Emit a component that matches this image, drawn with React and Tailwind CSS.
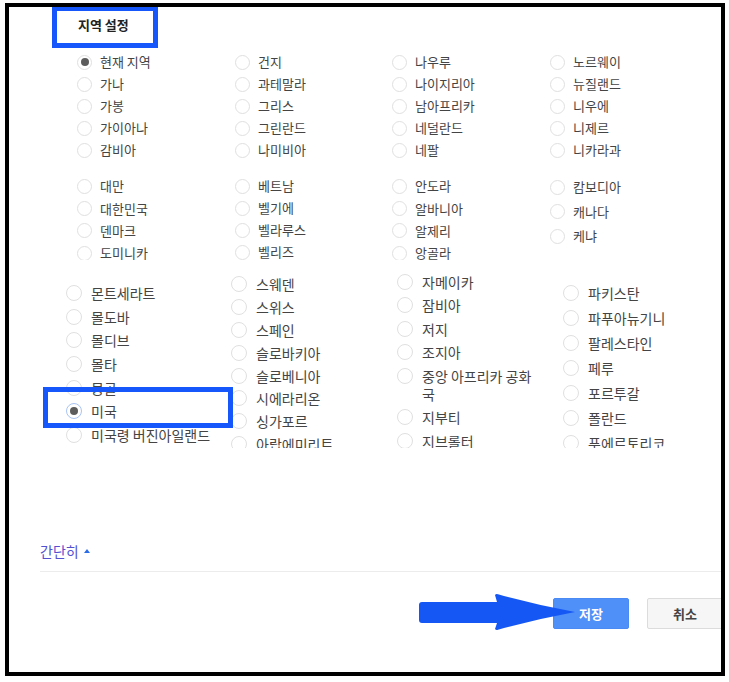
import React from "react";

const sec1 = [
  ["현재 지역", "가나", "가봉", "가이아나", "감비아"],
  ["건지", "과테말라", "그리스", "그린란드", "나미비아"],
  ["나우루", "나이지리아", "남아프리카", "네덜란드", "네팔"],
  ["노르웨이", "뉴질랜드", "니우에", "니제르", "니카라과"],
];

const sec2 = [
  { row: "h-[22.4px]", items: ["대만", "대한민국", "덴마크", "도미니카"] },
  { row: "h-[22.1px]", items: ["베트남", "벨기에", "벨라루스", "벨리즈"] },
  { row: "h-[22.4px]", items: ["안도라", "알바니아", "알제리", "앙골라"] },
  { row: "h-[24.5px]", items: ["캄보디아", "캐나다", "케냐"] },
];

const sec3 = [
  {
    col: "w-[165px] shrink-0 pt-[11px]",
    row: "h-[23.7px]",
    items: ["몬트세라트", "몰도바", "몰디브", "몰타", "몽골", "미국", "미국령 버진아일랜드"],
  },
  {
    col: "w-[166px] shrink-0 pt-[2.5px]",
    row: "h-[22.9px]",
    items: ["스웨덴", "스위스", "스페인", "슬로바키아", "슬로베니아", "시에라리온", "싱가포르", "아랍에미리트"],
  },
  {
    col: "w-[166px] shrink-0 pt-[0.4px]",
    row: "h-[23.3px]",
    items: ["자메이카", "잠비아", "저지", "조지아", "중앙 아프리카 공화국", "지부티", "지브롤터"],
  },
  {
    col: "w-[160px] shrink-0 pt-[10.5px]",
    row: "h-[25px]",
    items: ["파키스탄", "파푸아뉴기니", "팔레스타인", "페루", "포르투갈", "폴란드", "푸에르토리코"],
  },
];

function Radio({ checked, focus, big }) {
  const base = big
    ? "flex h-[16px] w-[16px] shrink-0 items-center justify-center rounded-full border bg-white"
    : "flex h-[15px] w-[15px] shrink-0 items-center justify-center rounded-full border bg-white";
  const color = focus ? " border-[#a9c4f5]" : " border-[#e0e0e0]";
  return (
    <span className={base + color}>
      {checked && <span className="h-[8px] w-[8px] rounded-full bg-[#5c5c5c]" />}
    </span>
  );
}

function SmallItem({ label, row }) {
  return (
    <div className={"flex shrink-0 items-center " + row}>
      <Radio checked={label === "현재 지역"} />
      <span className="ml-[8px] whitespace-nowrap text-[13px] leading-[18px] text-[#444]">{label}</span>
    </div>
  );
}

function BigItem({ label, row }) {
  if (label === "중앙 아프리카 공화국") {
    return (
      <div className="flex shrink-0 items-start py-[3px]">
        <span className="mt-[1px]">
          <Radio big />
        </span>
        <span className="ml-[9px] max-w-[122px] text-[14px] leading-[18px] text-[#444]">{label}</span>
      </div>
    );
  }
  const isUS = label === "미국";
  return (
    <div className={"flex shrink-0 items-center " + row}>
      <Radio big checked={isUS} focus={isUS} />
      <span className="ml-[9px] whitespace-nowrap text-[14px] leading-[18px] text-[#444]">{label}</span>
    </div>
  );
}

export default function App() {
  return (
    <div className="h-[682px] w-[729px] bg-white font-['Noto_Sans_CJK_KR','Noto_Sans',sans-serif]">
      <div className="relative ml-[5px] mt-[3px] h-[673px] w-[720px] overflow-hidden border-4 border-black bg-white">
        {/* Title */}
        <div className="pl-[69px] pt-[8px] text-[13px] font-bold leading-[20px] text-[#222]">지역 설정</div>

        {/* Section 1 */}
        <div className="ml-[68px] mt-[16px] grid grid-cols-[158px_157px_158px_157px]">
          {sec1.map((col, i) => (
            <div key={i} className="flex flex-col">
              {col.map((l) => (
                <SmallItem key={l} label={l} row="h-[22px]" />
              ))}
            </div>
          ))}
        </div>

        {/* Section 2 */}
        <div className="ml-[68px] mt-[14px] grid h-[85px] grid-cols-[158px_157px_158px_157px] overflow-hidden">
          {sec2.map((col, i) => (
            <div key={i} className="flex flex-col">
              {col.items.map((l) => (
                <SmallItem key={l} label={l} row={col.row} />
              ))}
            </div>
          ))}
        </div>

        {/* Section 3 */}
        <div className="ml-[57px] mt-[10px] flex h-[178px] overflow-hidden">
          {sec3.map((col, i) => (
            <div key={i} className={"flex flex-col " + col.col}>
              {col.items.map((l) => (
                <BigItem key={l} label={l} row={col.row} />
              ))}
            </div>
          ))}
        </div>

        {/* Collapse link */}
        <div className="ml-[31px] mt-[93px] flex h-[20px] items-center">
          <span className="text-[14px] leading-[20px] text-[#5450d0]">간단히</span>
          <span className="ml-[5px] h-0 w-0 border-b-[4px] border-l-[3px] border-r-[3px] border-b-[#2b6de8] border-l-transparent border-r-transparent" />
        </div>

        {/* Divider */}
        <div className="ml-[31px] mt-[10px] h-px bg-[#ececec]" />

        {/* Buttons */}
        <div className="ml-[544px] mt-[26px] flex gap-[18px]">
          <button className="flex h-[31px] w-[76px] shrink-0 items-center justify-center rounded-[2px] border border-[#4a8af4] bg-[#4f8ff8] text-[13px] font-bold text-white">
            저장
          </button>
          <button className="flex h-[31px] w-[76px] shrink-0 items-center justify-center rounded-[2px] border border-[#dcdcdc] bg-[#f6f6f6] text-[13px] font-bold text-[#444]">
            취소
          </button>
        </div>

        {/* Annotations */}
        <div className="absolute left-[43px] top-[-1px] h-[42px] w-[106px] border-[5px] border-[#1557fa]" />
        <div className="absolute left-[34px] top-[380px] h-[41px] w-[190px] border-[5px] border-[#1557fa]" />
        <svg
          className="absolute left-[408px] top-[586px]"
          width="160"
          height="40"
          viewBox="0 0 160 40"
        >
          <path
            d="M5 9 H80 L78 2 Q79 0.5 81 1.2 Q120 12 158 19 Q120 26 81 36.8 Q79 37.5 78 36 L80 30 H5 Q2 30 2 27 V12 Q2 9 5 9 Z"
            fill="#1557f5"
          />
        </svg>
      </div>
    </div>
  );
}
